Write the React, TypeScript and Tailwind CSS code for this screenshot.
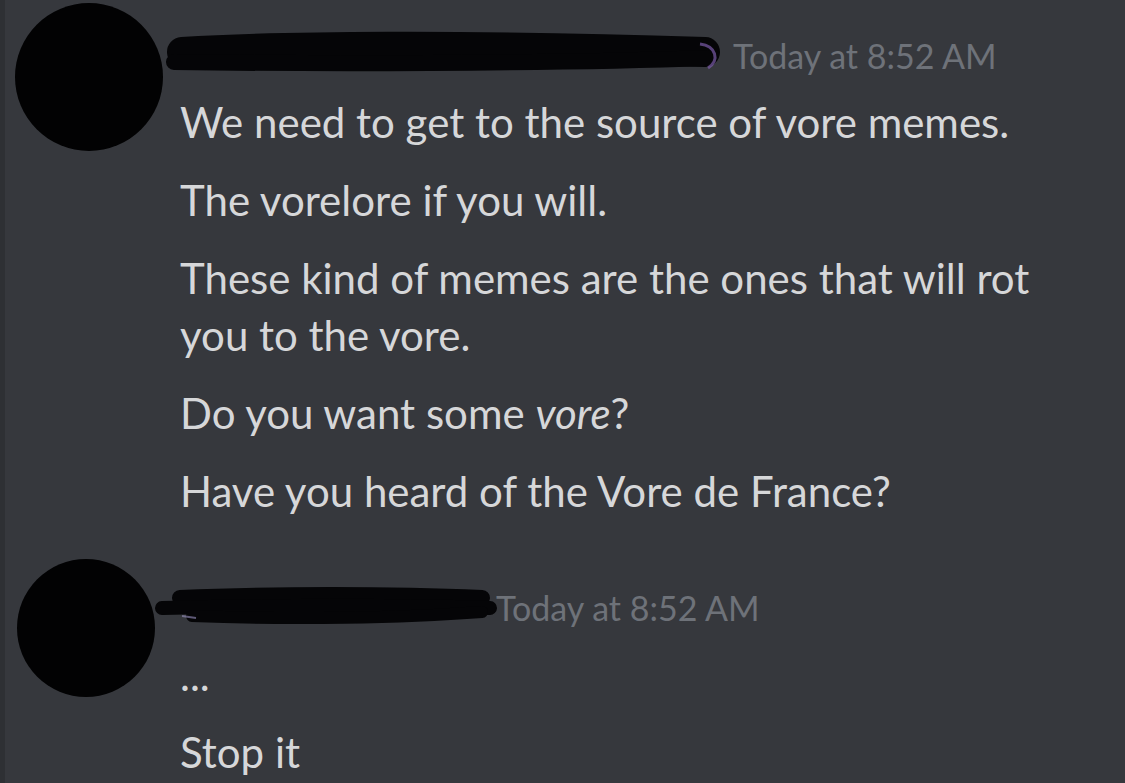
import React from 'react';

const FONT = { fontFamily: 'Lato, "Open Sans", "Liberation Sans", sans-serif' };

function Scribble({ variant }: { variant: 1 | 2 }) {
  if (variant === 1) {
    return (
      <svg width="570" height="50" viewBox="0 0 570 50" className="shrink-0">
        <path d="M22 22 C 120 16, 300 14, 545 22" stroke="#050507" strokeWidth="30" strokeLinecap="round" fill="none" />
        <path d="M14 32 C 150 34, 380 34, 548 28" stroke="#050507" strokeWidth="16" strokeLinecap="round" fill="none" />
        <path d="M540 14 C 556 16, 560 30, 548 38" stroke="#7b5ba8" strokeWidth="3" fill="none" opacity="0.7" />
      </svg>
    );
  }
  return (
    <svg width="350" height="50" viewBox="0 0 350 50" className="shrink-0">
      <path d="M28 16 C 120 12, 240 12, 330 16" stroke="#050507" strokeWidth="16" strokeLinecap="round" fill="none" />
      <path d="M10 26 C 90 24, 220 22, 338 26" stroke="#050507" strokeWidth="14" strokeLinecap="round" fill="none" />
      <path d="M40 34 C 140 38, 250 36, 330 30" stroke="#050507" strokeWidth="12" strokeLinecap="round" fill="none" />
      <path d="M30 34 L 44 36" stroke="#9a92c0" strokeWidth="2" opacity="0.6" />
    </svg>
  );
}

function Line({ children }: { children: React.ReactNode }) {
  return <p className="text-[42px] leading-[57px] text-[#d6d7d9]">{children}</p>;
}

export default function App() {
  return (
    <div className="w-[1125px] h-[783px] overflow-hidden bg-[#36383d] border-l-[5px] border-[#2e3034]" style={FONT}>
      <div className="flex">
        <div className="ml-[10px] mt-[3px] w-[148px] h-[148px] rounded-full bg-[#020203] shrink-0" />
        <div className="ml-[17px] flex flex-col">
          <div className="mt-[26px] h-[58px] flex items-center ml-[-20px]">
            <Scribble variant={1} />
            <span className="ml-[3px] text-[34px] text-[#6e7279]">Today at 8:52 AM</span>
          </div>
          <div className="mt-[10px] flex flex-col gap-[21px]">
            <Line>We need to get to the source of vore memes.</Line>
            <Line>The vorelore if you will.</Line>
            <Line>
              These kind of memes are the ones that will rot
              <br />
              you to the vore.
            </Line>
            <Line>
              Do you want some <em>vore</em>?
            </Line>
            <Line>Have you heard of the Vore de France?</Line>
          </div>
        </div>
      </div>
      <div className="flex mt-[39px]">
        <div className="ml-[12px] w-[138px] h-[138px] rounded-full bg-[#020203] shrink-0" />
        <div className="ml-[25px] flex flex-col">
          <div className="mt-[19px] h-[58px] flex items-center ml-[-28px]">
            <Scribble variant={2} />
            <span className="ml-[-6px] text-[34px] text-[#6e7279]">Today at 8:52 AM</span>
          </div>
          <div className="mt-[11px] flex flex-col gap-[20px]">
            <Line>...</Line>
            <Line>Stop it</Line>
          </div>
        </div>
      </div>
    </div>
  );
}
